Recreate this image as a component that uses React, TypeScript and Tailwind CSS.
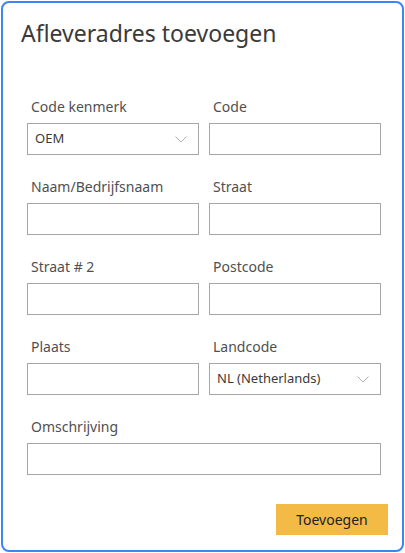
const FONT = { fontFamily: '"Noto Sans", "Open Sans", sans-serif' };

interface FieldProps {
  label: string;
  value?: string;
  select?: boolean;
  wide?: boolean;
}

function Chevron() {
  return (
    <svg width="12" height="7" viewBox="0 0 12 7" fill="none" className="text-[#b0b0b0]">
      <polyline points="0.5,0.5 6,6 11.5,0.5" stroke="currentColor" strokeWidth="1" />
    </svg>
  );
}

function Field({ label, value, select, wide }: FieldProps) {
  return (
    <div className={`flex flex-col ${wide ? "col-span-2" : ""}`}>
      <label className="pl-1 text-[14px] leading-[20px] text-[#505050]">{label}</label>
      <div className="mt-[6px] flex h-[32px] items-center justify-between border border-[#a6a6a6] bg-white pl-[7px] pr-[11px]">
        <span className="text-[13px] text-[#3a3a3a]">{value}</span>
        {select && <Chevron />}
      </div>
    </div>
  );
}

export default function App() {
  return (
    <div className="bg-white" style={FONT}>
      <div className="ml-px mt-px flex h-[551px] w-[403px] flex-col rounded-[8px] border-2 border-[#3d84f5] bg-white">
        <h1 className="pl-[18px] pt-[14px] text-[23px] leading-[32px] text-[#3a3a3a]">Afleveradres toevoegen</h1>

        <div className="mt-[48px] grid grid-cols-[172px_172px] gap-x-[10px] gap-y-[22px] pl-[24px]">
          <Field label="Code kenmerk" value="OEM" select />
          <Field label="Code" />
          <Field label="Naam/Bedrijfsnaam" />
          <Field label="Straat" />
          <Field label="Straat # 2" />
          <Field label="Postcode" />
          <Field label="Plaats" />
          <Field label="Landcode" value="NL (Netherlands)" select />
          <Field label="Omschrijving" wide />
        </div>

        <div className="mt-[29px] flex justify-end pr-[14px]">
          <button className="h-[31px] w-[112px] bg-[#f3bb45] text-[14px] text-[#222]">Toevoegen</button>
        </div>
      </div>
    </div>
  );
}
